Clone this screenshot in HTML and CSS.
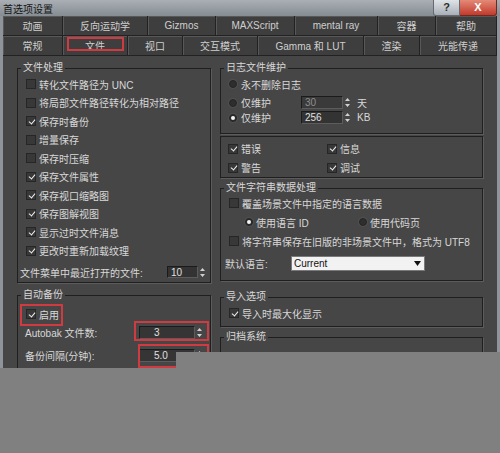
FILE: index.html
```html
<!DOCTYPE html>
<html lang="zh-CN">
<head>
<meta charset="utf-8">
<title>首选项设置</title>
<link rel="stylesheet" href="styles.css">
</head>
<body>
<div class="window">
  <div class="titlebar">
    <span class="title">首选项设置</span>
    <div class="caption">
      <span class="btn-help">?</span>
      <span class="btn-close">X</span>
    </div>
  </div>
  <div class="client">
    <div class="tabs">
      <div class="tabrow row1">
        <div class="tab">动画</div>
        <div class="tab">反向运动学</div>
        <div class="tab">Gizmos</div>
        <div class="tab">MAXScript</div>
        <div class="tab">mental ray</div>
        <div class="tab">容器</div>
        <div class="tab">帮助</div>
      </div>
      <div class="tabrow row2">
        <div class="tab">常规</div>
        <div class="tab active annot-tab">文件</div>
        <div class="tab">视口</div>
        <div class="tab">交互模式</div>
        <div class="tab">Gamma 和 LUT</div>
        <div class="tab">渲染</div>
        <div class="tab">光能传递</div>
      </div>
    </div>
    <div class="panel">
      <div class="col col-left">
        <fieldset class="grp grp-files">
          <legend>文件处理</legend>
          <div class="cb-row"><span class="cb"></span><span>转化文件路径为 UNC</span></div>
          <div class="cb-row"><span class="cb"></span><span>将局部文件路径转化为相对路径</span></div>
          <div class="cb-row"><span class="cb on"></span><span>保存时备份</span></div>
          <div class="cb-row"><span class="cb"></span><span>增量保存</span></div>
          <div class="cb-row"><span class="cb"></span><span>保存时压缩</span></div>
          <div class="cb-row"><span class="cb on"></span><span>保存文件属性</span></div>
          <div class="cb-row"><span class="cb on"></span><span>保存视口缩略图</span></div>
          <div class="cb-row"><span class="cb on"></span><span>保存图解视图</span></div>
          <div class="cb-row"><span class="cb on"></span><span>显示过时文件消息</span></div>
          <div class="cb-row"><span class="cb on"></span><span>更改时重新加载纹理</span></div>
          <div class="recent-row">
            <span>文件菜单中最近打开的文件:</span>
            <span class="spin spin-recent"><span class="field">10</span><span class="arrows"><svg width="7" height="11" viewBox="0 0 7 11"><path d="M3.5 1 L6 4 L1 4 Z M3.5 10 L6 7 L1 7 Z" fill="#d0d0d0"/></svg></span></span>
          </div>
        </fieldset>
        <fieldset class="grp grp-auto">
          <legend>自动备份</legend>
          <div class="cb-row first"><span class="annot-wrap annot-enable"><span class="cb on"></span><span>启用</span></span></div>
          <div class="val-row">
            <span>Autobak 文件数:</span>
            <span class="spin spin-wide annot-count"><span class="field">3</span><span class="arrows"><svg width="7" height="11" viewBox="0 0 7 11"><path d="M3.5 1 L6 4 L1 4 Z M3.5 10 L6 7 L1 7 Z" fill="#d0d0d0"/></svg></span></span>
          </div>
          <div class="val-row second">
            <span>备份间隔(分钟):</span>
            <span class="spin spin-wide annot-interval"><span class="field">5.0</span><span class="arrows"><svg width="7" height="11" viewBox="0 0 7 11"><path d="M3.5 1 L6 4 L1 4 Z M3.5 10 L6 7 L1 7 Z" fill="#d0d0d0"/></svg></span></span>
          </div>
          <div class="filler"></div>
        </fieldset>
      </div>
      <div class="col col-right">
        <fieldset class="grp grp-log">
          <legend>日志文件维护</legend>
          <div class="r-row r1"><span class="radio"></span><span>永不删除日志</span></div>
          <div class="r-row r2">
            <span class="radio"></span><span class="r-label">仅维护</span>
            <span class="spin spin-log disabled"><span class="field">30</span><span class="arrows"><svg width="7" height="11" viewBox="0 0 7 11"><path d="M3.5 1 L6 4 L1 4 Z M3.5 10 L6 7 L1 7 Z" fill="#d0d0d0"/></svg></span></span>
            <span class="unit">天</span>
          </div>
          <div class="r-row r3">
            <span class="radio on"></span><span class="r-label">仅维护</span>
            <span class="spin spin-log"><span class="field">256</span><span class="arrows"><svg width="7" height="11" viewBox="0 0 7 11"><path d="M3.5 1 L6 4 L1 4 Z M3.5 10 L6 7 L1 7 Z" fill="#d0d0d0"/></svg></span></span>
            <span class="unit">KB</span>
          </div>
        </fieldset>
        <div class="box-levels">
          <div class="cb-row"><span class="cb on"></span><span>错误</span></div>
          <div class="cb-row"><span class="cb on"></span><span>信息</span></div>
          <div class="cb-row"><span class="cb on"></span><span>警告</span></div>
          <div class="cb-row"><span class="cb on"></span><span>调试</span></div>
        </div>
        <fieldset class="grp grp-strings">
          <legend>文件字符串数据处理</legend>
          <div class="cb-row s1"><span class="cb"></span><span>覆盖场景文件中指定的语言数据</span></div>
          <div class="radio-pair">
            <div class="r-item"><span class="radio on"></span><span>使用语言 ID</span></div>
            <div class="r-item"><span class="radio"></span><span>使用代码页</span></div>
          </div>
          <div class="cb-row s3"><span class="cb"></span><span>将字符串保存在旧版的非场景文件中，格式为 UTF8</span></div>
          <div class="lang-row">
            <span class="lang-label">默认语言:</span>
            <span class="dropdown"><span>Current</span><svg width="7" height="5" viewBox="0 0 7 5"><path d="M0 0 L7 0 L3.5 5 Z" fill="#111"/></svg></span>
          </div>
        </fieldset>
        <fieldset class="grp grp-import">
          <legend>导入选项</legend>
          <div class="cb-row"><span class="cb on"></span><span>导入时最大化显示</span></div>
        </fieldset>
        <fieldset class="grp grp-archive">
          <legend>归档系统</legend>
          <div class="filler"></div>
        </fieldset>
      </div>
    </div>
  </div>
  <div class="cutout"></div>
</div>
</body>
</html>
```

FILE: styles.css
```css
* { box-sizing: border-box; }
html, body { margin: 0; padding: 0; }
body {
  width: 500px;
  height: 453px;
  overflow: hidden;
  background: #808080;
  font-family: "Liberation Sans", "Noto Sans CJK SC", sans-serif;
  font-size: 10px;
  color: #d8d8d8;
}
.window {
  position: relative;
  width: 500px;
  height: 368px;
  overflow: hidden;
  display: flex;
  flex-direction: column;
  background: #464646;
}
.titlebar {
  height: 21px;
  display: flex;
  justify-content: space-between;
  align-items: flex-start;
  background: linear-gradient(#a9afb5, #858c92);
}
.title {
  padding: 2px 0 0 3px;
  line-height: 13px;
  font-size: 10px;
  color: #151515;
  font-family: "Noto Sans CJK SC", sans-serif;
}
.caption { display: flex; margin-right: 3px; }
.btn-help {
  width: 27px;
  height: 16px;
  line-height: 15px;
  text-align: center;
  font-size: 11px;
  font-weight: bold;
  color: #2d2d2d;
  background: linear-gradient(#dfe3e7, #a8afb6);
  border: 1px solid #646a70;
  border-top: 0;
  border-radius: 0 0 0 3px;
}
.btn-close {
  width: 37px;
  height: 16px;
  line-height: 15px;
  text-align: center;
  font-size: 11px;
  font-weight: bold;
  color: #fff;
  background: linear-gradient(#e48a78, #c13a2c);
  border: 1px solid #6e2a22;
  border-top: 0;
  border-left: 0;
  border-radius: 0 0 3px 0;
}
.client {
  flex: 1;
  display: flex;
  flex-direction: column;
  border-left: 3px solid #8e9499;
  border-right: 3px solid #8e9499;
}
.tabs { background: #363636; }
.tabrow { display: grid; height: 20px; }
.row1 { grid-template-columns: 60px 85px 68px 79px 83px 58px 61px; }
.row2 { grid-template-columns: 60px 65px 55px 75px 106px 56px 77px; }
.tab {
  position: relative;
  display: flex;
  align-items: center;
  justify-content: center;
  background: #3e3e3e;
  border-right: 1px solid #222;
  border-bottom: 1px solid #222;
  box-shadow: inset 1px 1px 0 #585858;
  color: #cfcfcf;
  font-size: 10px;
  white-space: nowrap;
}
.annot-tab::after {
  content: "";
  position: absolute;
  left: 4px; right: 3px; top: 1px; bottom: 4px;
  border: 2px solid #cf3b40;
}
.panel {
  flex: 1;
  display: flex;
  gap: 9px;
  padding: 5px 0 0 14px;
}
.col { display: flex; flex-direction: column; }
.col-left { width: 194px; }
.col-right { width: 263px; }

.grp {
  margin: 0;
  padding: 0 3px 0 8px;
  border: 1px solid #1f1f1f;
  box-shadow: 1px 1px 0 #5c5c5c;
  min-width: 0;
}
.grp legend {
  padding: 0 2px;
  margin-left: -5px;
  line-height: 14px;
  font-size: 10px;
  color: #d8d8d8;
}
.cb-row {
  display: flex;
  align-items: center;
  gap: 3px;
  height: 18.5px;
  white-space: nowrap;
}
.cb {
  width: 10px;
  height: 10px;
  flex: none;
  border: 1px solid #262626;
  background: #383838;
  position: relative;
}
.cb.on::after {
  content: "";
  position: absolute;
  left: 2.5px; top: 0.5px;
  width: 3px; height: 5px;
  border: solid #f0f0f0;
  border-width: 0 1.5px 1.5px 0;
  transform: rotate(40deg);
}
.radio {
  width: 8px;
  height: 8px;
  flex: none;
  border-radius: 50%;
  background: #2e2e2e;
  border: 1px solid #252525;
  box-shadow: 0 0 0 1px #505050;
  position: relative;
}
.radio.on::after {
  content: "";
  position: absolute;
  left: 1px; top: 1px;
  width: 4px; height: 4px;
  border-radius: 50%;
  background: #f4f4f4;
}
.spin { display: flex; height: 13px; }
.spin .field {
  flex: 1;
  background: #333;
  border: 1px solid;
  border-color: #1b1b1b #5c5c5c #5c5c5c #1b1b1b;
  color: #e0e0e0;
  font-size: 10px;
  line-height: 11px;
  padding-left: 3px;
}
.spin.disabled .field { color: #8e8e8e; background: #3a3a3a; }
.spin .arrows {
  width: 9px;
  display: flex;
  align-items: center;
  justify-content: center;
}
.spin-recent { width: 40px; height: 12px; }
.recent-row {
  display: flex;
  align-items: center;
  justify-content: space-between;
  height: 18px;
  margin-top: 3px;
  margin-left: -6px;
  white-space: nowrap;
}
.grp-files { padding-bottom: 1px; }
.grp-auto { margin-top: 5px; flex: 1; }
.grp-auto .first { margin-top: 3px; }
.annot-wrap { position: relative; display: inline-flex; align-items: center; gap: 3px; }
.annot-enable::after {
  content: "";
  position: absolute;
  left: -6px; right: -4px; top: -3px; bottom: -4px;
  border: 2px solid #cf3b40;
}
.val-row {
  display: flex;
  align-items: center;
  justify-content: space-between;
  height: 18px;
  margin-left: -1px;
  white-space: nowrap;
}
.val-row.second { margin-top: 5px; }
.spin-wide { width: 65px; margin-right: 3px; position: relative; }
.spin-wide .field { padding-left: 14px; background: #353535; }
.annot-count::after {
  content: "";
  position: absolute;
  left: -5px; right: -5px; top: -5px; bottom: -2px;
  border: 2px solid #cf3b40;
}
.annot-interval::after {
  content: "";
  position: absolute;
  left: -1px; right: -5px; top: -5px; bottom: -6px;
  border: 2px solid #cf3b40;
}
.filler { height: 40px; }

.r-row { display: flex; align-items: center; gap: 4px; white-space: nowrap; }
.r1 { height: 18px; }
.r2 { height: 15px; margin-top: 2px; }
.r3 { height: 15px; }
.r-label { width: 56px; }
.spin-log { width: 51px; }
.unit { margin-left: 1px; }
.grp-log { padding-bottom: 8px; }

.box-levels {
  margin-top: 2px;
  border: 1px solid #1f1f1f;
  box-shadow: 1px 1px 0 #5c5c5c;
  padding: 2px 0 0 7px;
  display: grid;
  grid-template-columns: 99px auto;
  grid-auto-rows: 19px;
}
.box-levels .cb-row { height: 19px; }

.grp-strings { margin-top: 3px; padding-bottom: 8px; }
.grp-strings .s1 { height: 16px; }
.radio-pair {
  display: grid;
  grid-template-columns: 114px auto;
  height: 20px;
  margin-top: 1px;
  padding-left: 16px;
  align-items: center;
}
.r-item { display: flex; align-items: center; gap: 3px; white-space: nowrap; }
.grp-strings .s3 { height: 18px; }
.lang-row {
  display: flex;
  align-items: center;
  height: 18px;
  margin-top: 4px;
  margin-left: -4px;
}
.lang-label { width: 66px; }
.dropdown {
  width: 134px;
  height: 15px;
  display: flex;
  align-items: center;
  justify-content: space-between;
  padding: 0 3px 0 2px;
  background: #f2f2f2;
  border: 1px solid #7a7a7a;
  color: #111;
  font-size: 10px;
}
.grp-import { margin-top: 9px; padding-bottom: 4px; }
.grp-import .cb-row { height: 18px; }
.grp-archive { margin-top: 3px; flex: 1; }

.cutout {
  position: absolute;
  left: 176px;
  top: 352px;
  right: 0;
  bottom: 0;
  background: #808080;
}
```
